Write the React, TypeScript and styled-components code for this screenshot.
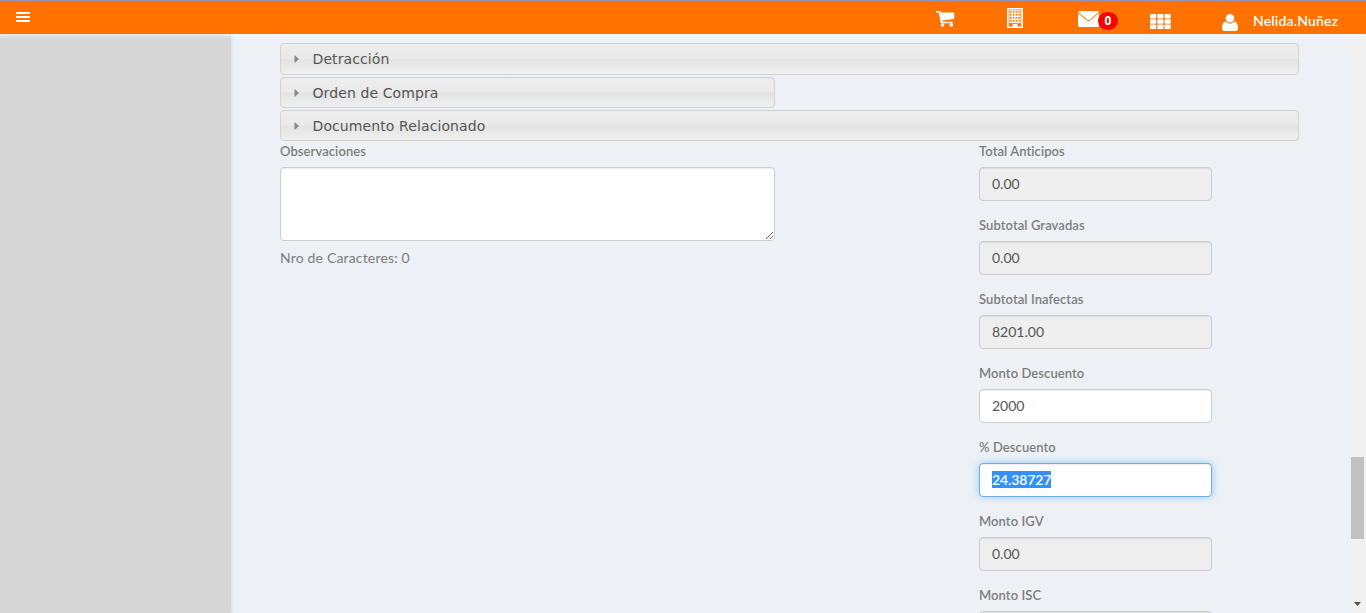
import React from 'react';
import styled, { createGlobalStyle } from 'styled-components';

const GlobalStyle = createGlobalStyle`
  *, *::before, *::after { box-sizing: border-box; }
  html, body { margin: 0; height: 100%; overflow: hidden; }
  body { background: #edf1f6; font-family: Lato, "Open Sans", sans-serif; font-size: 14px; color: #7d7d7d; }
`;

const Page = styled.div`
  display: flex;
  flex-direction: column;
  height: 613px;
  overflow: hidden;
`;

const TopBar = styled.header`
  position: relative;
  z-index: 2;
  flex: none;
  display: flex;
  align-items: flex-start;
  height: 34px;
  padding-left: 16px;
  background: #ff7200;
  border-top: 1px solid #8f98b5;
  box-shadow: 0 1px 5px rgba(255, 255, 255, 0.9);
  color: #fff;

  svg { display: block; fill: currentColor; }
`;

const BarItem = styled.div<{ $left?: number; $top: number; $w: number }>`
  flex: none;
  width: ${p => p.$w}px;
  margin-left: ${p => p.$left ?? 0}px;
  margin-top: ${p => p.$top}px;
`;

const Badge = styled.span`
  flex: none;
  width: 20px;
  height: 18px;
  margin: 11px 0 0 -1px;
  border-radius: 9px;
  background: #f00;
  font: bold 12px/18px "Open Sans", sans-serif;
  text-align: center;
`;

const UserName = styled.span`
  margin: 11px 0 0 15px;
  font-size: 14px;
  font-weight: 600;
  line-height: 18px;
  letter-spacing: 0.17px;
  white-space: nowrap;
`;

const Body = styled.div`
  flex: 1;
  min-height: 0;
  display: flex;
`;

const Sidebar = styled.aside`
  flex: none;
  width: 231px;
  background: #d7d7d7;
  box-shadow: 0 0 3px rgba(0, 0, 0, 0.13);
`;

const Content = styled.main`
  flex: 1;
  min-width: 0;
  padding: 9px 52px 0 49px;
  overflow: hidden;
`;

const ScrollTrack = styled.div`
  flex: none;
  display: flex;
  flex-direction: column;
  width: 15px;
  padding: 423px 2px 7px 0;
  background: #f1f1f1;
  svg { display: block; margin: auto 0 0 3px; fill: #505050; }
`;

const ScrollThumb = styled.div`
  height: 82px;
  background: #c1c1c1;
`;

const AccordionHead = styled.div<{ $half?: boolean; $h?: number }>`
  display: flex;
  align-items: center;
  width: ${p => (p.$half ? '495px' : '1019px')};
  height: ${p => p.$h ?? 31}px;
  margin-bottom: 2px;
  padding-left: 13px;
  border: 1px solid #d0d2d4;
  border-radius: 4px;
  background: linear-gradient(#ededed 0%, #eaeaea 49%, #e3e3e3 51%, #f0f0f0 100%);
  color: #555;
  font: 14px/20px "DejaVu Sans", Verdana, sans-serif;
  letter-spacing: 0.1px;
  svg { display: block; margin-right: 13.5px; fill: #888; }
`;

const Columns = styled.div`
  display: flex;
  justify-content: space-between;
  width: 932px;
  margin-top: -2px;
`;

const Notes = styled.div`
  width: 495px;
`;

const Totals = styled.div`
  width: 233px;
`;

const Label = styled.label`
  display: block;
  height: 26px;
  font-size: 13px;
  font-weight: 600;
  line-height: 20px;
  letter-spacing: 0.08px;
  white-space: nowrap;
`;

const NotesArea = styled.textarea`
  display: block;
  width: 495px;
  height: 74px;
  border: 1px solid #ccc;
  border-radius: 4px;
  background: #fff;
  box-shadow: inset 0 1px 1px rgba(0, 0, 0, 0.075);
  outline: 0;
`;

const Counter = styled.p`
  margin: 7px 0 0;
  font-size: 14px;
  line-height: 20px;
  letter-spacing: 0.17px;
`;

const Field = styled.div`
  height: 74px;
`;

const Box = styled.div<{ $kind?: 'open' | 'active' }>`
  height: 34px;
  padding: 6px 12px;
  border: 1px solid ${p => (p.$kind === 'active' ? '#66afe9' : '#ccc')};
  border-radius: 4px;
  background: ${p => (p.$kind ? '#fff' : '#eee')};
  box-shadow: inset 0 1px 1px rgba(0, 0, 0, 0.075)${p => (p.$kind === 'active' ? ', 0 0 8px rgba(102, 175, 233, 0.6)' : '')};
  color: #555;
  font-size: 14px;
  line-height: 20px;
`;

const Selection = styled.span`
  display: inline-block;
  height: 17px;
  margin-top: 1px;
  background: #3390ff;
  color: #fff;
  font-weight: 600;
  line-height: 18px;
  letter-spacing: -0.12px;
  vertical-align: top;
`;

const fields: { label: string; value?: string; kind?: 'open' | 'active' }[] = [
  { label: 'Total Anticipos', value: '0.00' },
  { label: 'Subtotal Gravadas', value: '0.00' },
  { label: 'Subtotal Inafectas', value: '8201.00' },
  { label: 'Monto Descuento', value: '2000', kind: 'open' },
  { label: '% Descuento', value: '24.38727', kind: 'active' },
  { label: 'Monto IGV', value: '0.00' },
  { label: 'Monto ISC' },
];

const Arrow = () => (
  <svg width="5" height="8" viewBox="0 0 5 8"><path d="M.5 0l4.500 4L.5 8z" /></svg>
);

const BarsIcon = () => (
  <svg width="14" height="10" viewBox="0 0 14 10">
    <rect width="14" height="2" rx=".6" /><rect y="4" width="14" height="2" rx=".6" /><rect y="8" width="14" height="2" rx=".6" />
  </svg>
);

const CartIcon = () => (
  <svg width="19" height="16" viewBox="0 0 19 16">
    <path d="M.8 0h3.100c.5 0 .8.300.9.800L5 1.500h13.200v5.700c0 .5-.3.800-.8.900L6.300 9.600l.3 1.100h10v1.500H5.400c-.4 0-.7-.3-.8-.7L2.900 1.700H.8C-.3 1.700-.3 0 .8 0z" />
    <circle cx="6.500" cy="14" r="1.800" /><circle cx="15.300" cy="14" r="1.800" />
  </svg>
);

const BuildingIcon = () => {
  const rows = [3, 6, 9, 12];
  const cols = [3.200, 5.900, 8.600, 11.300];
  return (
    <svg width="16" height="20" viewBox="0 0 16 20">
      <path fillRule="evenodd" d="M0 0h16v20H0zM1.700 1.500v17h3.900V16h4.800v2.500h3.900v-17z" />
      <path d="M2.500 2.200h11v13h-11z" />
      {rows.map(y => cols.map(x => <rect key={`${x}-${y}`} x={x} y={y} width="1.500" height="1.700" fill="#ff7200" />))}
    </svg>
  );
};

const MailIcon = () => (
  <svg width="21" height="16" viewBox="0 0 21 16">
    <path d="M1.500 0h18c.6 0 1.100.4 1.300 1L12 8.500c-.9.700-2.100.7-3 0L.2 1C.4.400.9 0 1.500 0z" />
    <path d="M0 1.900l8.500 7.300c1.200 1 2.800 1 4 0L21 1.900v12.600c0 .8-.7 1.500-1.500 1.500h-18C.7 16 0 15.300 0 14.500z" />
  </svg>
);

const GridIcon = () => (
  <svg width="21" height="15" viewBox="0 0 21 15">
    {[0, 5.250, 10.500].map(y => [0, 7.250, 14.500].map(x => (
      <rect key={`${x}-${y}`} x={x} y={y} width="6.200" height="4.400" rx=".7" />
    )))}
  </svg>
);

const UserIcon = () => (
  <svg width="16" height="17" viewBox="0 0 16 17">
    <circle cx="8" cy="4.300" r="4.300" />
    <path d="M3.700 7.500C5 9 6.400 9.500 8 9.500S11 9 12.300 7.500C15 8 16 10.800 16 13.900 16 15.800 14.800 17 13 17H3c-1.800 0-3-1.200-3-3.100C0 10.800 1 8 3.700 7.500z" />
  </svg>
);

export default function App() {
  return (
    <Page>
      <GlobalStyle />
      <TopBar>
        <BarItem $w={14} $top={11}><BarsIcon /></BarItem>
        <BarItem $w={19} $left={905.5} $top={10}><CartIcon /></BarItem>
        <BarItem $w={16} $left={52.5} $top={7}><BuildingIcon /></BarItem>
        <BarItem $w={21} $left={55} $top={10}><MailIcon /></BarItem>
        <Badge>0</Badge>
        <BarItem $w={21} $left={32} $top={13}><GridIcon /></BarItem>
        <BarItem $w={16} $left={51} $top={13}><UserIcon /></BarItem>
        <UserName>Nelida.Nuñez</UserName>
      </TopBar>
      <Body>
        <Sidebar />
        <Content>
          <AccordionHead $h={32}><Arrow />Detracción</AccordionHead>
          <AccordionHead $half><Arrow />Orden de Compra</AccordionHead>
          <AccordionHead><Arrow />Documento Relacionado</AccordionHead>
          <Columns>
            <Notes>
              <Label>Observaciones</Label>
              <NotesArea />
              <Counter>Nro de Caracteres: 0</Counter>
            </Notes>
            <Totals>
              {fields.map(f => (
                <Field key={f.label}>
                  <Label>{f.label}</Label>
                  <Box $kind={f.kind}>
                    {f.kind === 'active' ? <Selection>{f.value}</Selection> : f.value}
                  </Box>
                </Field>
              ))}
            </Totals>
          </Columns>
        </Content>
        <ScrollTrack>
          <ScrollThumb />
          <svg width="7" height="4" viewBox="0 0 7 4"><path d="M0 0h7L3.500 4z" /></svg>
        </ScrollTrack>
      </Body>
    </Page>
  );
}
